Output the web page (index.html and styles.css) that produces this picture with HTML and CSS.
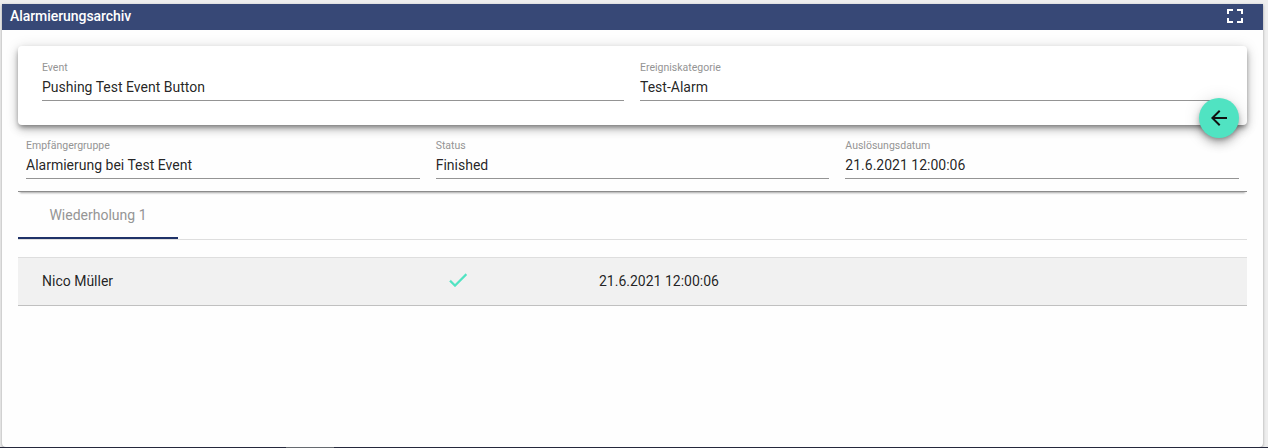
FILE: index.html
```
<!DOCTYPE html>
<html lang="de">
<head>
    <meta charset="UTF-8">
    <meta name="viewport" content="width=device-width, initial-scale=1.0">
    <title>Alarmierungsarchiv</title>
    <link rel="stylesheet" href="styles.css">
</head>
<body>
    <div class="page">
        <div class="widget">
            <div class="widget-header">
                <span class="widget-title">Alarmierungsarchiv</span>
                <svg class="fullscreen-icon" viewBox="0 0 16 14">
                    <path d="M0 0h6v2H2v3H0zM10 0h6v5h-2V2h-4zM0 9h2v3h4v2H0zM14 9h2v5h-6v-2h4z"/>
                </svg>
            </div>
            <div class="widget-content">
                <div class="event-card">
                    <div class="field">
                        <label>Event</label>
                        <p>Pushing Test Event Button</p>
                    </div>
                    <div class="field">
                        <label>Ereigniskategorie</label>
                        <p>Test-Alarm</p>
                    </div>
                    <button class="back-button">
                        <svg viewBox="0 0 24 24">
                            <path d="M20 11H7.83l5.59-5.59L12 4l-8 8 8 8 1.41-1.41L7.83 13H20v-2z"/>
                        </svg>
                    </button>
                </div>
                <div class="group-info">
                    <div class="field">
                        <label>Empfängergruppe</label>
                        <p>Alarmierung bei Test Event</p>
                    </div>
                    <div class="field">
                        <label>Status</label>
                        <p>Finished</p>
                    </div>
                    <div class="field">
                        <label>Auslösungsdatum</label>
                        <p>21.6.2021 12:00:06</p>
                    </div>
                </div>
                <div class="tabs">
                    <div class="tab">Wiederholung 1</div>
                </div>
                <div class="person-row">
                    <span class="person-name">Nico Müller</span>
                    <span class="person-state">
                        <svg viewBox="0 0 24 24">
                            <path d="M9 16.17L4.83 12l-1.42 1.41L9 19 21 7l-1.41-1.41z"/>
                        </svg>
                    </span>
                    <span class="person-date">21.6.2021 12:00:06</span>
                </div>
            </div>
        </div>
        <div class="taskbar"><div class="taskbar-item"></div></div>
    </div>
</body>
</html>
```
FILE: styles.css
```
* {
    box-sizing: border-box;
}
body {
    margin: 0;
    font-family: Roboto, "Liberation Sans", sans-serif;
    font-size: 14px;
    color: rgba(0, 0, 0, 0.87);
    background: #eeeeee;
}
.page {
    display: flex;
    flex-direction: column;
    height: 448px;
    padding-top: 4px;
    overflow: hidden;
}
.widget {
    flex: 1;
    margin: 0 5px 0 2px;
    background: #fefefe;
    border-radius: 0 0 4px 4px;
    box-shadow: 0 1px 3px rgba(0, 0, 0, 0.35);
}
.widget-header {
    display: flex;
    align-items: center;
    justify-content: space-between;
    height: 26px;
    padding: 0 20px 0 8px;
    background: #374876;
    color: #fff;
}
.widget-title {
    font-weight: 500;
    letter-spacing: -0.06px;
    line-height: 24px;
    height: 26px;
}
.fullscreen-icon {
    width: 16px;
    height: 14px;
    margin-top: -2px;
    fill: #fff;
}
.widget-content {
    padding: 16px;
}
.event-card {
    position: relative;
    display: flex;
    gap: 16px;
    height: 79px;
    padding: 15px 25px 0 24px;
    background: #fff;
    border-radius: 4px;
    box-shadow: 0 3px 5px -1px rgba(0, 0, 0, 0.4), 0 5px 10px rgba(0, 0, 0, 0.18), 0 1px 14px rgba(0, 0, 0, 0.12);
}
.field {
    flex: 1;
    height: 40px;
    border-bottom: 1px solid #949494;
}
.field label {
    display: block;
    font-size: 10.5px;
    line-height: 14px;
    color: #949494;
}
.field p {
    margin: 4px 0 0;
    line-height: 16px;
}
.back-button {
    position: absolute;
    right: 8px;
    bottom: -13px;
    display: flex;
    align-items: center;
    justify-content: center;
    width: 40px;
    height: 40px;
    padding: 0;
    border: none;
    border-radius: 50%;
    background: #50e3c2;
    box-shadow: 0 3px 5px -1px rgba(0, 0, 0, 0.3), 0 6px 10px rgba(0, 0, 0, 0.2), 0 1px 18px rgba(0, 0, 0, 0.12);
}
.back-button svg {
    width: 24px;
    height: 24px;
    fill: #111;
}
.group-info {
    display: flex;
    gap: 16px;
    height: 67px;
    padding: 14px 8px 0;
    border-bottom: 1px solid #8c8c8c;
    box-shadow: 0 3px 2px -2px rgba(0, 0, 0, 0.35);
}
.tabs {
    display: flex;
    height: 48px;
    border-bottom: 1px solid #dedede;
}
.tab {
    width: 160px;
    height: 47px;
    border-bottom: 2px solid #1f3268;
    line-height: 47px;
    text-align: center;
    color: #959595;
}
.person-row {
    display: flex;
    align-items: center;
    height: 49px;
    margin-top: 17px;
    padding: 0 0 2px 24px;
    background: #f1f1f1;
    border-top: 1px solid #dedede;
    border-bottom: 1px solid #c0c0c0;
}
.person-name {
    width: 404px;
}
.person-state {
    width: 153px;
    height: 25px;
}
.person-state svg {
    width: 24px;
    height: 24px;
    fill: #50e3c2;
    stroke: #50e3c2;
    stroke-width: 0.3;
}
.taskbar {
    height: 1px;
    background: #25283c;
}
.taskbar-item {
    width: 48px;
    height: 1px;
    margin-left: 286px;
    background: #666a70;
}
```
